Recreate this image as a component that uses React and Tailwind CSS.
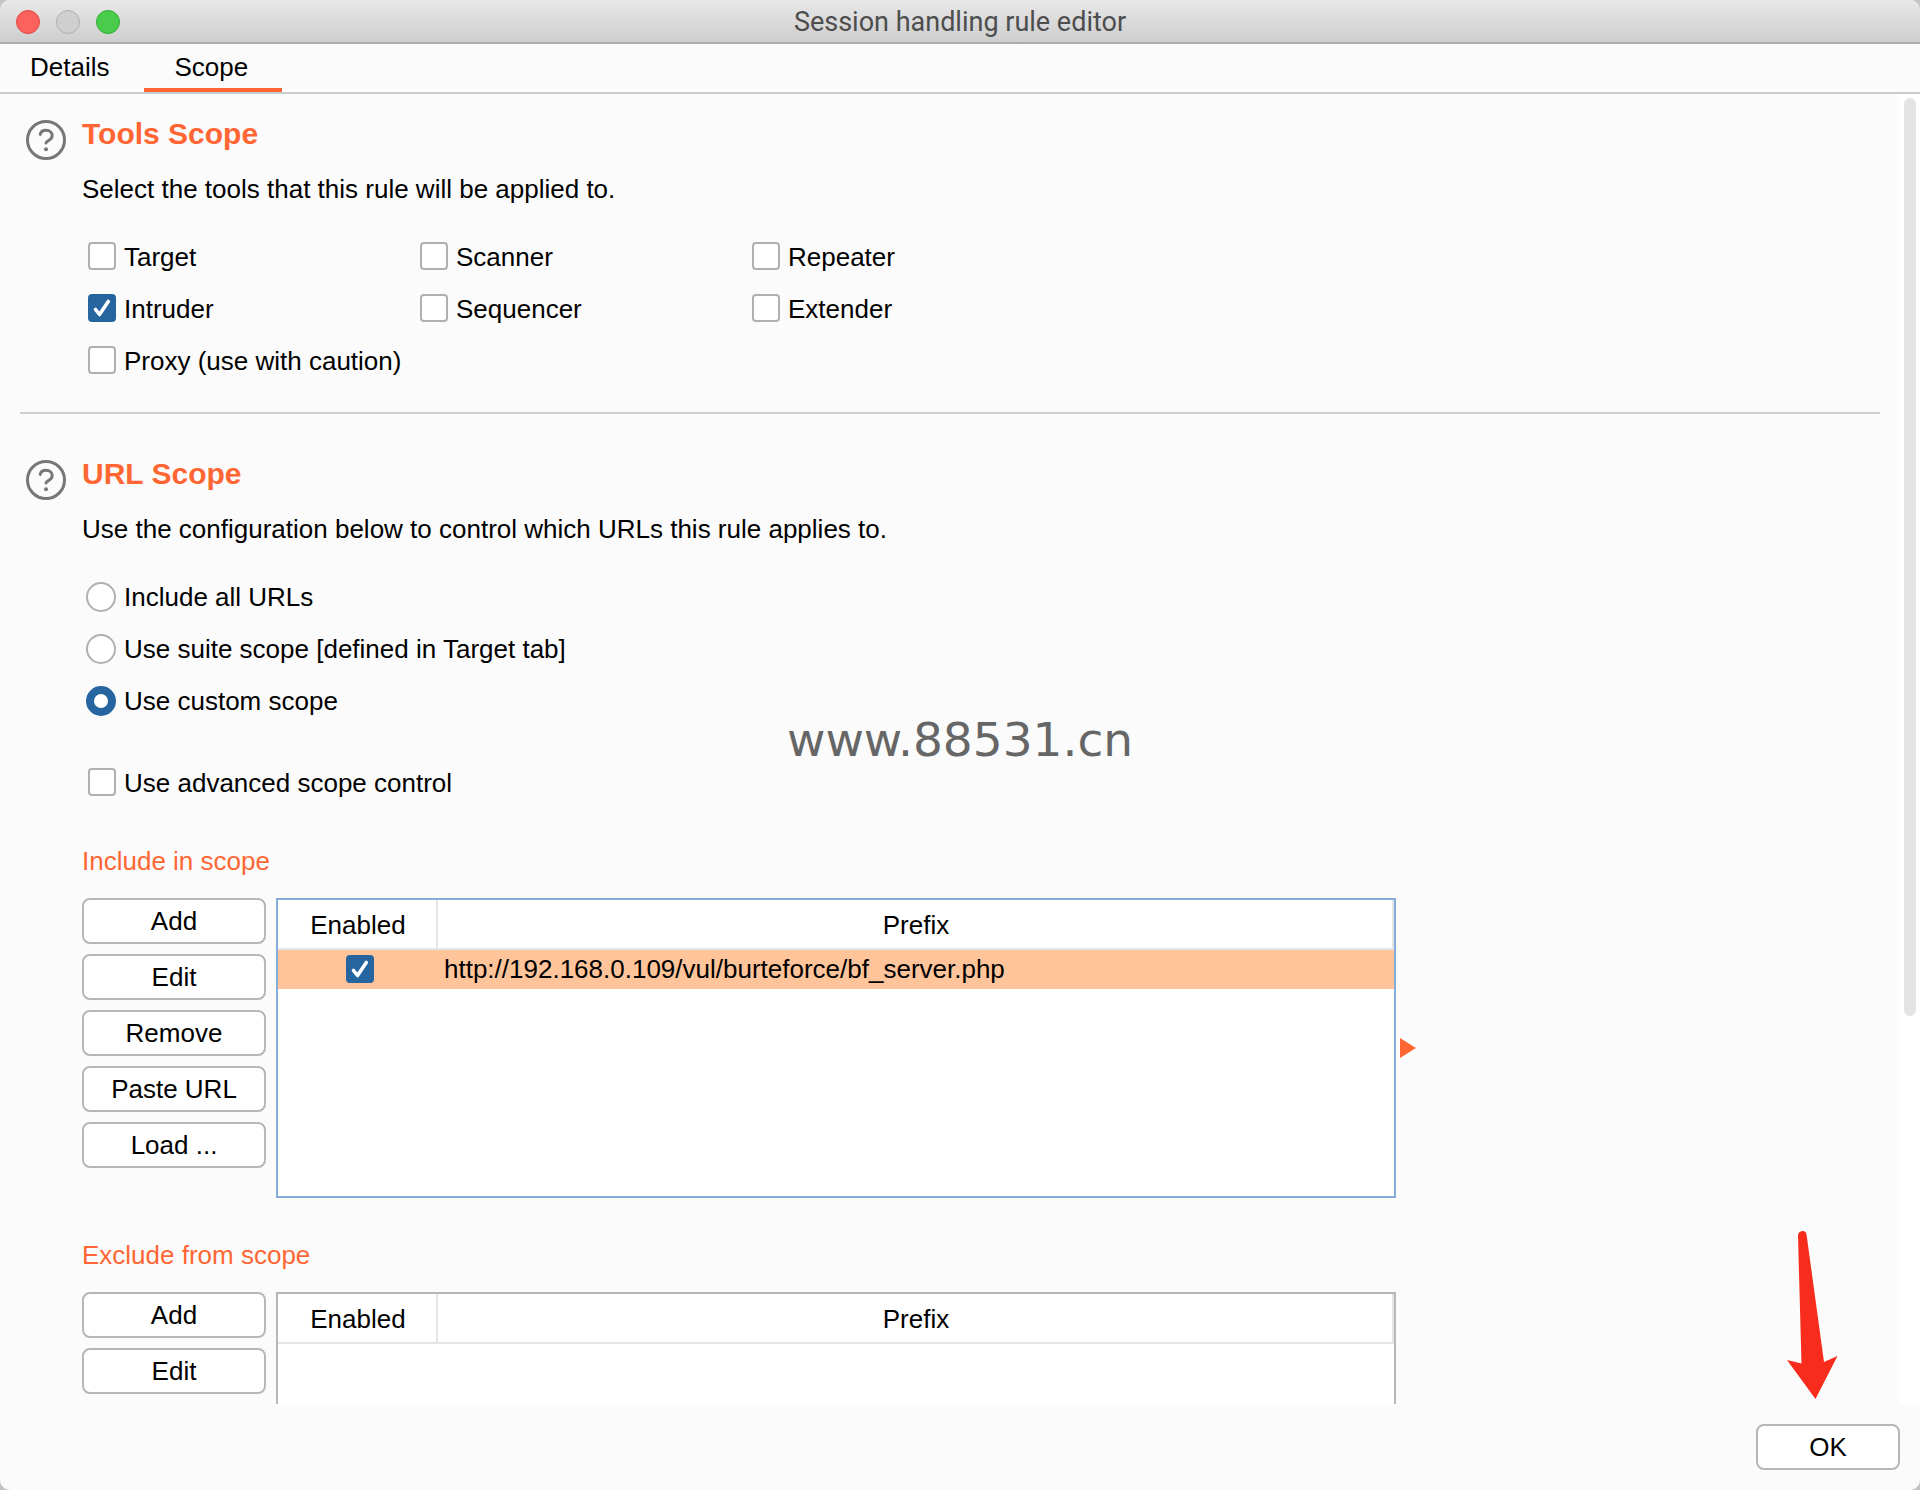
import { useState } from "react";
import { clsx } from "clsx";

const tools = [
    ["Target", "Scanner", "Repeater"],
    ["Intruder", "Sequencer", "Extender"],
    ["Proxy (use with caution)"],
];

const urlOptions = [
    { id: "all", label: "Include all URLs" },
    { id: "suite", label: "Use suite scope [defined in Target tab]" },
    { id: "custom", label: "Use custom scope" },
];

const includeActions = ["Add", "Edit", "Remove", "Paste URL", "Load ..."];
const excludeActions = ["Add", "Edit"];

function HelpIcon() {
    return (
        <svg viewBox="0 0 40 40" className="w-10 h-10" fill="none" stroke="#777777" strokeLinecap="round">
            <circle cx="20" cy="20" r="18.5" strokeWidth="3" />
            <path d="M14.2 14.4 C14.8 11.6 17 10.3 20 10.3 C23.6 10.3 26.2 12.5 26.2 15.6 C26.2 18 24.8 19.3 22.8 20.4 C21 21.4 20 22 20 23" strokeWidth="3" />
            <circle cx="20" cy="29.3" r="2" fill="#777777" stroke="none" />
        </svg>
    )
}

function CheckBox({ checked, onChange, label, hideLabel }) {
    return (
        <label className="flex items-center gap-2 w-max leading-[26px]">
            <span className="relative w-7 h-7 shrink-0">
                <input
                    type="checkbox"
                    checked={checked}
                    onChange={onChange}
                    aria-label={hideLabel ? label : undefined}
                    className="block appearance-none w-7 h-7 rounded border-2 border-[#b0b0b0] bg-white checked:bg-[#26659f] checked:border-[#26659f]"
                />
                {checked && (
                    <svg viewBox="0 0 28 28" className="absolute inset-0 w-7 h-7 pointer-events-none" fill="none" stroke="white" strokeWidth="3.6" strokeLinecap="round" strokeLinejoin="round">
                        <path d="M7.5 15.5 L11.5 20.5 L20.3 7.5" />
                    </svg>
                )}
            </span>
            {!hideLabel && <span className="pt-0.5">{label}</span>}
        </label>
    )
}

function Radio({ checked, onChange, label }) {
    return (
        <label className="flex items-center gap-2 w-max leading-[30px]">
            <input
                type="radio"
                name="urlScope"
                checked={checked}
                onChange={onChange}
                className="appearance-none w-[30px] h-[30px] shrink-0 rounded-full border-2 border-[#b0b0b0] bg-white checked:border-8 checked:border-[#26659f]"
            />
            <span>{label}</span>
        </label>
    )
}

function Section({ title, description, children }) {
    return (
        <section className="flex gap-4 pl-[26px]">
            <div className="pt-[6px] shrink-0">
                <HelpIcon />
            </div>
            <div className="flex-1 min-w-0">
                <h2 className="text-[30px] leading-10 font-bold text-[#ff6633]">{title}</h2>
                <p className="mt-4 mb-8 pb-0.5 leading-[38px]">{description}</p>
                {children}
            </div>
        </section>
    )
}

function Button({ children, className }) {
    return (
        <button className={clsx("h-[46px] rounded-lg border-2 border-[#bab5b6] bg-white text-center leading-[42px] active:bg-gray-100", className)}>
            {children}
        </button>
    )
}

function ScopeList({ title, actions, rows, onToggle, focused }) {
    return (
        <div>
            <h3 className="leading-[34px] text-[#ff6633]">{title}</h3>
            <div className="mt-5 flex">
                <div className="flex flex-col gap-[10px] w-[184px] mr-[10px] shrink-0">
                    {actions.map((name) => <Button key={name}>{name}</Button>)}
                </div>
                <div className={clsx("flex-1 max-w-[1120px] h-[300px] border-2 bg-white", focused ? "border-[#85addb]" : "border-[#bab5b6]")}>
                    <table className="w-full table-fixed border-separate border-spacing-0" aria-label={title}>
                        <thead>
                            <tr className="h-[50px] *:p-0 *:pt-0.5 *:pl-0.5 *:font-normal *:border-r-2 *:border-b-2 *:border-[#e5e5e5]">
                                <th className="w-40">Enabled</th>
                                <th>Prefix</th>
                            </tr>
                        </thead>
                        <tbody>
                            {rows.map((row) => (
                                <tr key={row.prefix} className="h-[38px] bg-[#ffc499] *:p-0">
                                    <td>
                                        <div className="flex justify-center pl-1 pb-0.5">
                                            <CheckBox checked={row.enabled} onChange={() => onToggle(row.prefix)} label="Enabled" hideLabel />
                                        </div>
                                    </td>
                                    <td><span className="pl-[6px] leading-[38px]">{row.prefix}</span></td>
                                </tr>
                            ))}
                        </tbody>
                    </table>
                </div>
                {focused && (
                    <svg viewBox="0 0 16 20" className="w-4 h-5 ml-1 self-center shrink-0" fill="#ff6633">
                        <path d="M0 0 L16 10 L0 20 Z" />
                    </svg>
                )}
            </div>
        </div>
    )
}

export default function App() {

    const [tab, setTab] = useState("Scope");
    const [selected, setSelected] = useState(["Intruder"]);
    const [urlScope, setUrlScope] = useState("custom");
    const [advanced, setAdvanced] = useState(false);
    const [include, setInclude] = useState([
        { prefix: "http://192.168.0.109/vul/burteforce/bf_server.php", enabled: true },
    ]);

    function toggleTool(name) {
        setSelected((prev) => prev.includes(name) ? prev.filter((t) => t !== name) : [...prev, name])
    }

    function toggleInclude(prefix) {
        setInclude((prev) => prev.map((row) => row.prefix === prefix ? { ...row, enabled: !row.enabled } : row))
    }

    return (
        <div className="h-screen bg-[#c4c4c4]">
            <div className="relative h-full flex flex-col overflow-hidden rounded-[10px] bg-[#fbfbfb] text-black text-[26px] font-['Liberation_Sans',Arial,sans-serif]">

                {/* title bar */}
                <header className="h-11 shrink-0 flex items-center px-4 gap-4 border-b-2 border-[#ababab] bg-linear-to-b from-[#e8e8e8] to-[#cecece] pt-0.5">
                    <button aria-label="Close" className="w-6 h-6 rounded-full border border-[#e2463f] bg-[#fc625d]"></button>
                    <button aria-label="Minimize" className="w-6 h-6 rounded-full border border-[#b0b0b0] bg-[#cfcfcf]"></button>
                    <button aria-label="Zoom" className="w-6 h-6 rounded-full border border-[#2fac37] bg-[#49cc4b]"></button>
                    <h1 className="flex-1 pr-30 text-center text-[27px] leading-10 text-[#4d4d4d] font-[Roboto,sans-serif]">
                        Session handling rule editor
                    </h1>
                </header>

                {/* tabs */}
                <nav role="tablist" className="h-[50px] shrink-0 flex gap-[5px] border-b-2 border-[#c8cecd]">
                    {["Details", "Scope"].map((name) => (
                        <button
                            key={name}
                            role="tab"
                            aria-selected={tab === name}
                            onClick={() => setTab(name)}
                            className={clsx("min-w-[138px] px-[30px] pt-0.5 border-b-4 text-left leading-[42px]", tab === name ? "border-[#ff6633]" : "border-transparent")}
                        >
                            {name}
                        </button>
                    ))}
                </nav>

                <div className="flex-1 min-h-0 flex">
                    <main className="flex-1 min-w-0 pt-5 overflow-hidden">
                        <Section title="Tools Scope" description="Select the tools that this rule will be applied to.">
                            <div className="pl-[6px] flex flex-col gap-6">
                                {tools.map((row) => (
                                    <div key={row[0]} className="flex *:basis-[332px]">
                                        {row.map((name) => (
                                            <div key={name}>
                                                <CheckBox label={name} checked={selected.includes(name)} onChange={() => toggleTool(name)} />
                                            </div>
                                        ))}
                                    </div>
                                ))}
                            </div>
                        </Section>

                        <hr className="mx-5 mt-[38px] mb-10 border-0 h-0.5 bg-[#cfcfcf]" />

                        <Section title="URL Scope" description="Use the configuration below to control which URLs this rule applies to.">
                            <div className="pl-1 flex flex-col gap-[22px]">
                                {urlOptions.map((opt) => (
                                    <Radio key={opt.id} label={opt.label} checked={urlScope === opt.id} onChange={() => setUrlScope(opt.id)} />
                                ))}
                            </div>
                            <div className="mt-[52px] pl-[6px]">
                                <CheckBox label="Use advanced scope control" checked={advanced} onChange={() => setAdvanced(!advanced)} />
                            </div>
                            <div className="mt-12 flex flex-col gap-10">
                                <ScopeList title="Include in scope" actions={includeActions} rows={include} onToggle={toggleInclude} focused />
                                <ScopeList title="Exclude from scope" actions={excludeActions} rows={[]} />
                            </div>
                        </Section>
                    </main>

                    {/* scrollbar */}
                    <div className="w-5 shrink-0 bg-white px-1 pt-1">
                        <div className="h-[calc(70%+4px)] rounded-full bg-[#e4e4e4]"></div>
                    </div>
                </div>

                <footer className="shrink-0 flex justify-end px-5 py-5">
                    <Button className="w-36">OK</Button>
                </footer>

                {/* arrow pointing at OK */}
                <svg viewBox="0 0 51 168" className="absolute right-[82px] bottom-[91px] w-[51px] h-[168px] pointer-events-none" fill="#f72c1c">
                    <path d="M11 5 C11 -1.5 19.4 -1.5 19.6 4 L37 131 L50.5 125 L28.5 168 L0 129 L14.5 132.5 Z" />
                </svg>

                {/* watermark */}
                <div className="absolute inset-0 pb-3 flex items-center justify-center pointer-events-none text-[47px] leading-none text-[#666666] font-['DejaVu_Sans',Verdana,sans-serif]">
                    www.88531.cn
                </div>
            </div>
        </div>
    )
}
